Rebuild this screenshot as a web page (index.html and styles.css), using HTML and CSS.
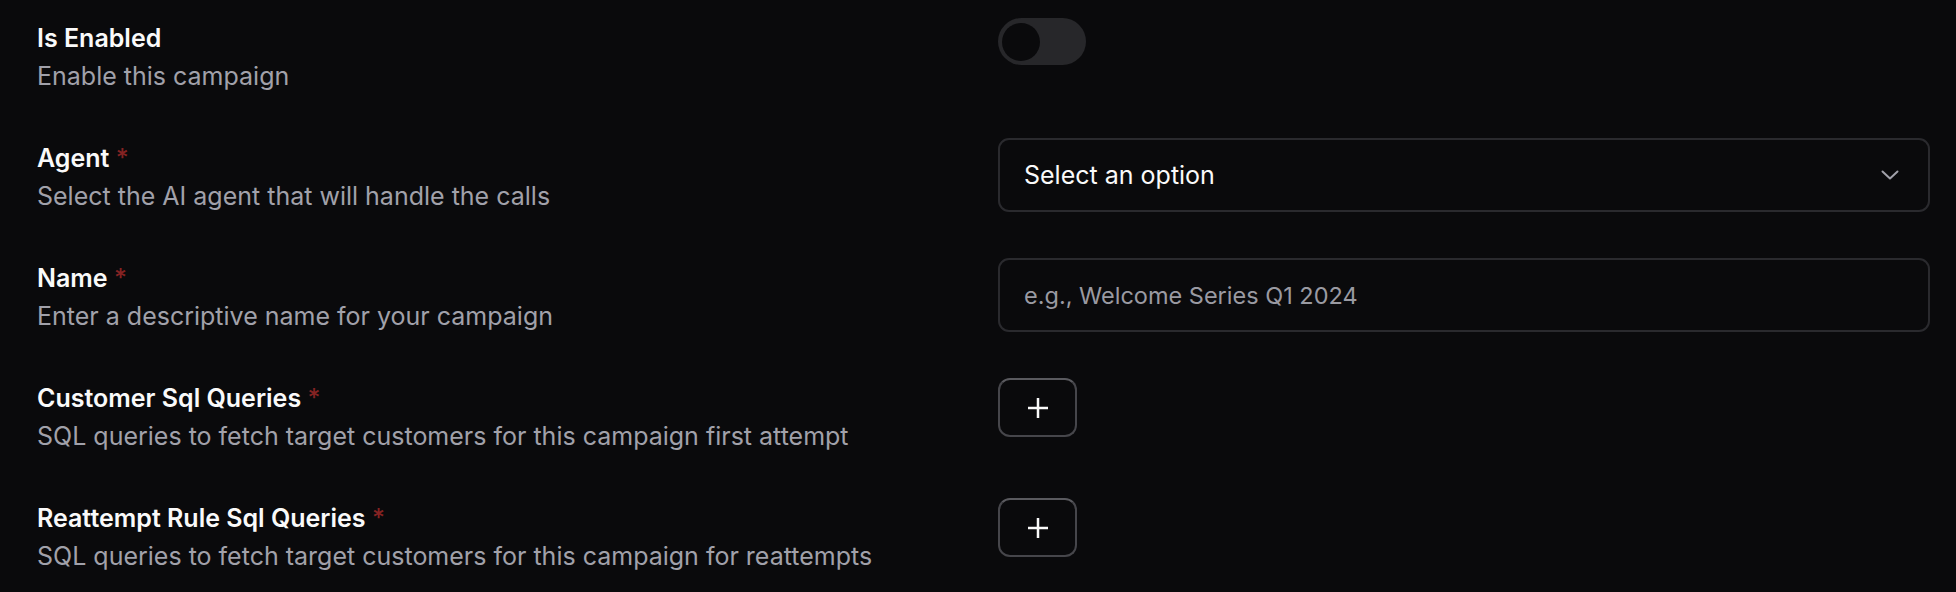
FILE: index.html
```html
<!DOCTYPE html>
<html lang="en">
<head>
<meta charset="utf-8">
<title>Campaign form</title>
<link rel="stylesheet" href="styles.css">
</head>
<body>
<form class="form">
  <div class="row">
    <div class="text">
      <div class="label">Is Enabled</div>
      <div class="desc">Enable this campaign</div>
    </div>
    <div class="control">
      <button type="button" class="toggle"><span class="knob"></span></button>
    </div>
  </div>
  <div class="row">
    <div class="text">
      <div class="label">Agent <span class="req">*</span></div>
      <div class="desc">Select the AI agent that will handle the calls</div>
    </div>
    <div class="control">
      <div class="select">
        <span class="select-value">Select an option</span>
        <svg class="chev" width="18" height="10" viewBox="0 0 18 10"><polyline points="1.5,1.5 9,8.5 16.5,1.5" fill="none" stroke="#a1a1aa" stroke-width="2" stroke-linecap="round" stroke-linejoin="round"/></svg>
      </div>
    </div>
  </div>
  <div class="row">
    <div class="text">
      <div class="label">Name <span class="req">*</span></div>
      <div class="desc">Enter a descriptive name for your campaign</div>
    </div>
    <div class="control">
      <input class="input" type="text" placeholder="e.g., Welcome Series Q1 2024">
    </div>
  </div>
  <div class="row">
    <div class="text">
      <div class="label">Customer Sql Queries <span class="req">*</span></div>
      <div class="desc">SQL queries to fetch target customers for this campaign first attempt</div>
    </div>
    <div class="control">
      <button type="button" class="add"><svg width="22" height="22" viewBox="0 0 22 22"><path d="M11 1v20M1 11h20" stroke="#fafafa" stroke-width="2.5"/></svg></button>
    </div>
  </div>
  <div class="row">
    <div class="text">
      <div class="label">Reattempt Rule Sql Queries <span class="req">*</span></div>
      <div class="desc">SQL queries to fetch target customers for this campaign for reattempts</div>
    </div>
    <div class="control">
      <button type="button" class="add"><svg width="22" height="22" viewBox="0 0 22 22"><path d="M11 1v20M1 11h20" stroke="#fafafa" stroke-width="2.5"/></svg></button>
    </div>
  </div>
</form>
</body>
</html>
```

FILE: styles.css
```css
html, body {
  margin: 0;
  padding: 0;
  background: #0a0a0c;
  height: 100%;
  overflow: hidden;
}
body {
  font-family: Inter, "Noto Sans", sans-serif;
  color: #fafafa;
}
.form {
  display: flex;
  flex-direction: column;
  gap: 44px;
  padding: 18px 26px 0 37px;
}
.row {
  display: grid;
  grid-template-columns: 961px 1fr;
  align-items: start;
  min-height: 76px;
}
.text {
  padding-top: 2px;
}
.label {
  font-size: 25px;
  line-height: 36px;
  font-weight: 600;
  color: #fafafa;
}
.req {
  color: #852323;
  font-weight: 500;
}
.desc {
  margin-top: 2px;
  font-size: 25px;
  line-height: 36px;
  color: #a1a1aa;
}
.control {
  display: flex;
}
.toggle {
  width: 88px;
  height: 47px;
  border: none;
  border-radius: 24px;
  background: #27272a;
  padding: 0 0 0 4px;
  display: flex;
  align-items: center;
  cursor: pointer;
}
.knob {
  width: 38px;
  height: 38px;
  border-radius: 50%;
  background: #0a0a0c;
}
.select, .input {
  box-sizing: border-box;
  width: 100%;
  height: 74px;
  border: 2px solid #2a2a2e;
  border-radius: 11px;
  background: #0a0a0c;
  font-family: Inter, "Noto Sans", sans-serif;
  font-size: 25px;
}
.select {
  display: flex;
  align-items: center;
  justify-content: space-between;
  padding: 0 29px 0 24px;
  color: #fafafa;
}
.input {
  padding: 0 24px;
  color: #fafafa;
  font-size: 23.5px;
  outline: none;
}
.input::placeholder {
  color: #9a9aa2;
}
.add {
  box-sizing: border-box;
  width: 79px;
  height: 59px;
  border: 2px solid #46464b;
  border-top-color: #5a5a5f;
  border-radius: 12px;
  background: #0a0a0c;
  display: flex;
  align-items: center;
  justify-content: center;
  padding: 0;
  cursor: pointer;
}
```
